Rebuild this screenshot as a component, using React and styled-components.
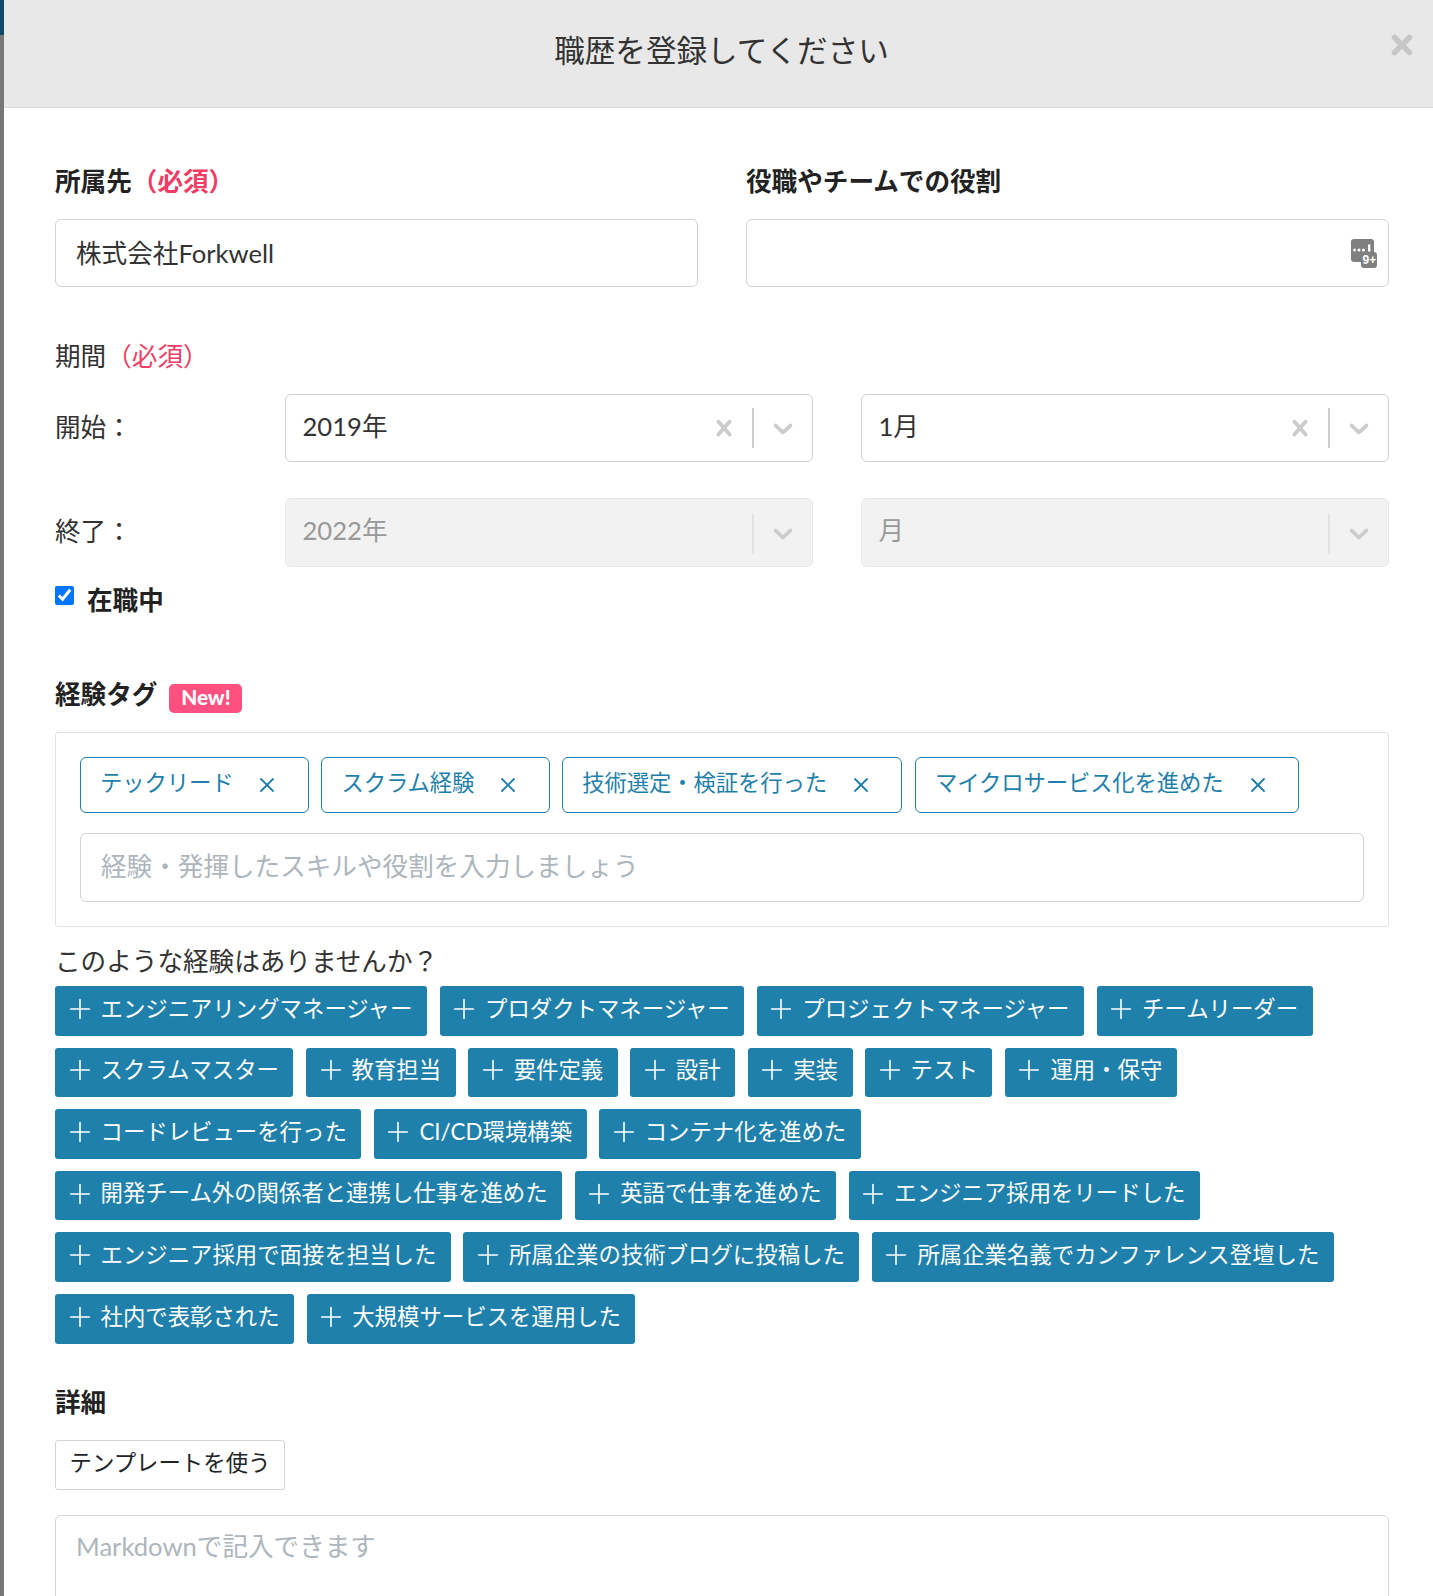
import React from 'react';
import styled, { createGlobalStyle } from 'styled-components';
import { Plus, X } from 'lucide-react';

const Global = createGlobalStyle`
  html, body { margin: 0; padding: 0; background: #fff; }
  * { box-sizing: border-box; }
  body { font-family: Lato, "Noto Sans CJK JP", "Noto Sans", sans-serif; color: #333; }
`;

const Page = styled.div`
  display: flex;
  width: 1433px;
  height: 1596px;
  overflow: hidden;
`;
const Backdrop = styled.div`
  flex: 0 0 4px;
  background: linear-gradient(#0d4a6b 0 35px, #777 35px 100%);
`;
const Modal = styled.div`
  flex: 1;
  min-width: 0;
  background: #fff;
`;
const Header = styled.header`
  position: relative;
  height: 108px;
  background: #e8e8e8;
  border-bottom: 1px solid #dcdcdc;
  display: flex;
  align-items: center;
  justify-content: center;
  padding-left: 6px;
  padding-bottom: 6px;
`;
const Title = styled.h1`
  margin: 0;
  font-size: 30.6px;
  font-weight: 400;
  line-height: 40px;
  color: #333;
`;
const Close = styled.button`
  position: absolute;
  right: 16px;
  top: 30px;
  padding: 0;
  border: 0;
  background: none;
  color: #c6c6c6;
  display: flex;
`;
const Body = styled.div`
  padding: 54px 44px 0 51px;
`;
const Columns = styled.div`
  display: grid;
  grid-template-columns: 1fr 1fr;
  column-gap: 48px;
`;
const Heading = styled.div`
  font-size: 25.6px;
  line-height: 38px;
  font-weight: ${p => (p.$normal ? 400 : 700)};
  color: ${p => (p.$normal ? '#333' : '#222')};
  margin-top: ${p => p.$top || 0}px;
  margin-bottom: ${p => p.$bottom || 0}px;
  display: flex;
  align-items: center;
`;
const Required = styled.span`
  color: #ef3d66;
`;
const FieldWrap = styled.div`
  position: relative;
`;
const TextInput = styled.input`
  display: block;
  width: 100%;
  height: ${p => p.$h || 68}px;
  padding: 0 20px 4px;
  font: inherit;
  font-size: 25.6px;
  color: #333;
  background: #fff;
  border: 1.5px solid #d2d2d2;
  border-radius: 6px;
  outline: none;
  &::placeholder { color: #adb5bd; opacity: 1; }
`;
const AutoIcon = styled.svg`
  position: absolute;
  right: 12px;
  top: 20px;
`;
const DateRow = styled.div`
  display: grid;
  grid-template-columns: 230px 1fr;
  margin-top: ${p => p.$top || 0}px;
  height: ${p => p.$h}px;
`;
const DatePair = styled.div`
  display: grid;
  grid-template-columns: 1fr 1fr;
  column-gap: 48px;
`;
const DateLabel = styled.div`
  font-size: 25.6px;
  line-height: 36px;
  padding-top: 15px;
  color: #333;
`;
const Select = styled.div`
  display: flex;
  align-items: center;
  border: 1.5px solid ${p => (p.$disabled ? '#e8e8e8' : '#d0d0d0')};
  border-radius: 6px;
  background: ${p => (p.$disabled ? '#f2f2f2' : '#fff')};
  padding-left: 16.5px;
`;
const SelectValue = styled.div`
  flex: 1;
  font-size: 25.6px;
  line-height: 36px;
  margin-top: ${p => (p.$disabled ? -6 : -4)}px;
  color: ${p => (p.$disabled ? '#999' : '#333')};
`;
const SelectIcon = styled.svg`
  display: block;
  fill: #cccccc;
`;
const Separator = styled.span`
  width: 1.6px;
  height: 40px;
  margin: 0 13px 0 12px;
  background: ${p => (p.$disabled ? '#e2e2e2' : '#cccccc')};
`;
const IconBox = styled.span`
  display: flex;
  margin-right: ${p => p.$right || 0}px;
`;
const CheckRow = styled.label`
  display: flex;
  align-items: flex-start;
  height: 38px;
  margin-top: 14px;
  font-size: 25.6px;
  line-height: 38px;
  font-weight: 700;
  color: #222;
`;
const Check = styled.input`
  width: 19px;
  height: 19px;
  margin: 5px 13px 0 0;
  accent-color: #0075ff;
`;
const NewBadge = styled.span`
  margin-left: 12px;
  margin-top: 9px;
  height: 29px;
  width: 73px;
  padding-bottom: 2px;
  display: flex;
  align-items: center;
  justify-content: center;
  background: #ff5080;
  border-radius: 5px;
  color: #fff;
  font-size: 20.8px;
  font-weight: 900;
  line-height: 1;
`;
const TagBox = styled.div`
  border: 1px solid #e2e2e2;
  border-radius: 3px;
  padding: 24px 24px 24px;
`;
const ChipRow = styled.div`
  display: flex;
  flex-wrap: wrap;
  gap: 12.5px;
  margin-bottom: 20px;
`;
const Chip = styled.div`
  height: 56px;
  display: flex;
  align-items: center;
  padding: 0 20.5px 4px 19px;
  border: 1px solid #2080ad;
  border-radius: 6px;
  color: #1f7fab;
  font-size: 22.4px;
  letter-spacing: -0.15px;
  line-height: 1;
  background: #fff;
  gap: 22px;
  white-space: nowrap;
`;
const ChipClose = styled(X)`
  margin-top: 4px;
  margin-right: 8px;
  flex: none;
`;
const Suggestions = styled.div`
  display: flex;
  flex-wrap: wrap;
  gap: 12px 12.6px;
  padding-right: 30px;
`;
const Suggestion = styled.button`
  height: 49.6px;
  display: flex;
  align-items: center;
  gap: 5px;
  padding: 0 14.5px 4px 8.5px;
  border: 0;
  border-radius: 3px;
  background: #1f80ac;
  color: #fff;
  font: inherit;
  font-size: 22.4px;
  line-height: 1;
  white-space: nowrap;
`;
const SuggestionPlus = styled(Plus)`
  flex: none;
`;
const Template = styled.button`
  display: block;
  width: 230px;
  height: 50px;
  padding: 0 0 8px;
  font: inherit;
  font-size: 22.4px;
  color: #212529;
  background: #fff;
  border: 1px solid #ced4da;
  border-radius: 3px;
  margin-bottom: 25px;
`;
const Detail = styled.textarea`
  display: block;
  width: 100%;
  height: 220px;
  padding: 12px 20px;
  font: inherit;
  font-size: 25.6px;
  line-height: 36px;
  border: 1px solid #ced4da;
  border-radius: 6px;
  outline: none;
  resize: none;
  &::placeholder { color: #adb5bd; opacity: 1; }
`;

const crossPath = 'M14.348 14.849c-0.469 0.469-1.229 0.469-1.697 0l-2.651-3.030-2.651 3.029c-0.469 0.469-1.229 0.469-1.697 0-0.469-0.469-0.469-1.229 0-1.697l2.758-3.15-2.759-3.152c-0.469-0.469-0.469-1.228 0-1.697s1.228-0.469 1.697 0l2.652 3.031 2.651-3.031c0.469-0.469 1.228-0.469 1.697 0s0.469 1.229 0 1.697l-2.758 3.152 2.758 3.15c0.469 0.469 0.469 1.229 0 1.698z';
const chevronPath = 'M4.516 7.548c0.436-0.446 1.043-0.481 1.576 0l3.908 3.747 3.908-3.747c0.533-0.481 1.141-0.446 1.576 0 0.436 0.445 0.408 1.197 0 1.615-0.406 0.418-4.695 4.502-4.695 4.502-0.217 0.223-0.502 0.335-0.789 0.335s-0.572-0.112-0.789-0.335c0 0-4.287-4.084-4.695-4.502s-0.436-1.17 0-1.615z';

const Icon20 = ({ d, size = 32 }) => (
  <SelectIcon width={size} height={size} viewBox="0 0 20 20"><path d={d} /></SelectIcon>
);

const DateSelect = ({ value, disabled }) => (
  <Select $disabled={disabled}>
    <SelectValue $disabled={disabled}>{value}</SelectValue>
    {!disabled && <IconBox><Icon20 d={crossPath} /></IconBox>}
    <Separator $disabled={disabled} />
    <IconBox $right={13}><Icon20 d={chevronPath} /></IconBox>
  </Select>
);

const chips = ['テックリード', 'スクラム経験', '技術選定・検証を行った', 'マイクロサービス化を進めた'];
const suggestions = [
  'エンジニアリングマネージャー', 'プロダクトマネージャー', 'プロジェクトマネージャー', 'チームリーダー',
  'スクラムマスター', '教育担当', '要件定義', '設計', '実装', 'テスト', '運用・保守',
  'コードレビューを行った', 'CI/CD環境構築', 'コンテナ化を進めた',
  '開発チーム外の関係者と連携し仕事を進めた', '英語で仕事を進めた', 'エンジニア採用をリードした',
  'エンジニア採用で面接を担当した', '所属企業の技術ブログに投稿した', '所属企業名義でカンファレンス登壇した',
  '社内で表彰された', '大規模サービスを運用した',
];

export default function App() {
  return (
    <Page>
      <Global />
      <Backdrop />
      <Modal>
        <Header>
          <Title>職歴を登録してください</Title>
          <Close aria-label="閉じる">
            <X size={30} strokeWidth={4.4} />
          </Close>
        </Header>
        <Body>
          <Columns>
            <div>
              <Heading $bottom={19}>所属先<Required>（必須）</Required></Heading>
              <TextInput defaultValue="株式会社Forkwell" />
            </div>
            <div>
              <Heading $bottom={19}>役職やチームでの役割</Heading>
              <FieldWrap>
                <TextInput />
                <AutoIcon width="26" height="29" viewBox="0 0 26 29" aria-hidden="true">
                  <rect x="0" y="0" width="23" height="23" rx="3" fill="#808080" />
                  <rect x="10" y="13" width="16" height="16" rx="3" fill="#808080" />
                  <circle cx="3.5" cy="11" r="1.5" fill="#fff" />
                  <circle cx="8" cy="11" r="1.5" fill="#fff" />
                  <circle cx="12.5" cy="11" r="1.5" fill="#fff" />
                  <rect x="17" y="5.5" width="2.4" height="7" fill="#fff" />
                  <text x="11.5" y="25" fontSize="12" fontWeight="700" fill="#fff" fontFamily="Liberation Sans, sans-serif">9+</text>
                </AutoIcon>
              </FieldWrap>
            </div>
          </Columns>

          <Heading $normal $top={50} $bottom={19}>期間<Required>（必須）</Required></Heading>
          <DateRow $h={68}>
            <DateLabel>開始：</DateLabel>
            <DatePair>
              <DateSelect value="2019年" />
              <DateSelect value="1月" />
            </DatePair>
          </DateRow>
          <DateRow $top={36} $h={69}>
            <DateLabel>終了：</DateLabel>
            <DatePair>
              <DateSelect value="2022年" disabled />
              <DateSelect value="月" disabled />
            </DatePair>
          </DateRow>
          <CheckRow>
            <Check type="checkbox" defaultChecked />
            在職中
          </CheckRow>

          <Heading $top={56} $bottom={19}>経験タグ<NewBadge>New!</NewBadge></Heading>
          <TagBox>
            <ChipRow>
              {chips.map(c => (
                <Chip key={c}>{c}<ChipClose size={24} strokeWidth={1.8} /></Chip>
              ))}
            </ChipRow>
            <TextInput $h={69} placeholder="経験・発揮したスキルや役割を入力しましょう" />
          </TagBox>

          <Heading $normal $top={15} $bottom={6}>このような経験はありませんか？</Heading>
          <Suggestions>
            {suggestions.map(s => (
              <Suggestion key={s}><SuggestionPlus size={32} strokeWidth={1.2} />{s}</Suggestion>
            ))}
          </Suggestions>

          <Heading $top={39} $bottom={19.5}>詳細</Heading>
          <Template>テンプレートを使う</Template>
          <Detail placeholder="Markdownで記入できます" />
        </Body>
      </Modal>
    </Page>
  );
}
